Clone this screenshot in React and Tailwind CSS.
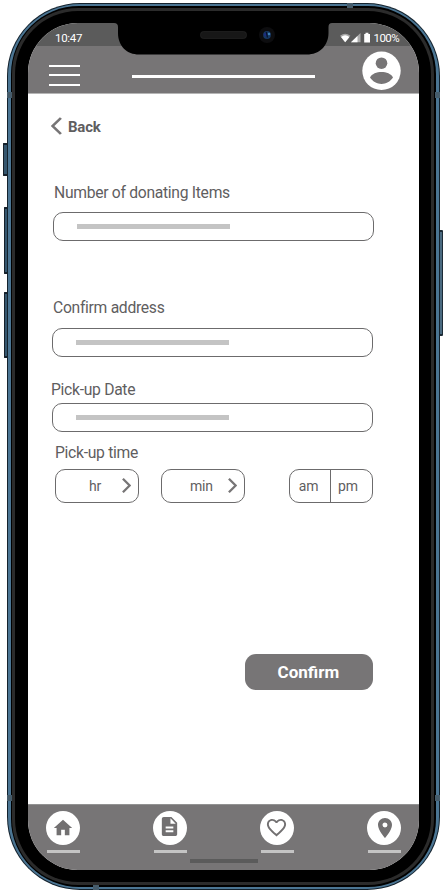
import React from "react";

function Field({ className = "" }) {
  return (
    <div className={`flex w-[321px] items-start rounded-[10px] border border-[#6c6b6c] pl-[22.6px] ${className}`}>
      <div className="h-[5px] w-[153.5px] bg-[#c4c4c4]" />
    </div>
  );
}

function Chevron({ left = false, className }) {
  return (
    <svg viewBox="0 0 10 18" className={className} fill="none" stroke="#777576" preserveAspectRatio="none">
      <path d={left ? "M9 1 L1.5 9 L9 17" : "M1 1 L8.5 9 L1 17"} strokeWidth="2.5" />
    </svg>
  );
}

function TimeSelect({ label, textClass, className = "" }) {
  return (
    <button className={`flex h-[34px] w-[84px] items-center rounded-[10px] border border-[#6c6b6c] ${className}`}>
      <span className={`leading-4 ${textClass}`}>{label}</span>
      <Chevron className="mr-[7px] ml-auto h-[15px] w-[9px]" />
    </button>
  );
}

function NavItem({ children }) {
  return (
    <div className="flex w-[34px] flex-col items-end">
      <div className="flex h-[34px] w-[34px] items-center justify-center rounded-full bg-white">{children}</div>
      <div className="mt-[5px] h-[3px] w-[33px] bg-[#c4c4c4]" />
    </div>
  );
}

function StatusBar() {
  return (
    <div className="flex h-[23px] items-center bg-[#5b5b5b] pt-[7px] text-white">
      <span className="ml-[27px] text-[11.500px] leading-3 tracking-[-0.3px]">10:47</span>
      <svg viewBox="0 0 32 12" className="ml-auto h-[12px] w-[32px]" fill="#fff">
        <path d="M1 3.8 Q6.2 -0.5 11.4 3.8 L6.2 10.2Z" opacity=".45" />
        <path d="M2 4.900 Q6.2 1.600 10.400 4.900 L6.2 10.2Z" />
        <path d="M12 10.3 L21.5 1 V10.3Z" opacity=".5" />
        <path d="M12 10.3 L18.5 4 V10.3Z" />
        <path d="M26.500 2 V0.800 H29.4 V2 H31 V10.5 H25.2 V2Z" />
      </svg>
      <span className="mr-[20px] ml-[3px] text-[11.500px] leading-3 tracking-[-0.600px]">100%</span>
    </div>
  );
}

function Header() {
  return (
    <header className="flex h-[48px] items-start border-b border-[#b5b5b5] bg-[#777576]">
      <div className="mt-[19px] ml-[21px] flex w-[31px] flex-col gap-[7.5px]">
        <div className="h-[2px] bg-white" />
        <div className="h-[2px] bg-white" />
        <div className="h-[2px] bg-white" />
      </div>
      <div className="mt-[29px] ml-[52.4px] h-[3px] w-[183px] bg-white" />
      <svg viewBox="0 0 39 39" className="mt-[5px] ml-[46.6px] h-[39px] w-[39px]">
        <circle cx="19.5" cy="19.8" r="19.2" fill="#fff" />
        <circle cx="19.5" cy="12.2" r="5.8" fill="#777576" />
        <path d="M8 26.6 C9.5 22.8 15 21 19.5 21 S29.5 22.8 31 26.6 C28 31 24 33 19.5 33 S11 31 8 26.6Z" fill="#777576" />
      </svg>
    </header>
  );
}

function Content() {
  return (
    <main className="flex h-[710px] flex-col items-start text-[15.700px] leading-[20px] tracking-[-0.300px] text-[#5f5e5f]">
      <button className="mt-[22px] ml-[23px] flex h-[20px] items-center">
        <Chevron left className="h-[18px] w-[11px]" />
        <span className="mt-[2px] ml-[6px] text-[15px] font-bold tracking-[-0.200px]">Back</span>
      </button>
      <label className="mt-[47px] ml-[26px]">Number of donating Items</label>
      <Field className="mt-[9px] ml-[25px] h-[29px] pt-[11px]" />
      <label className="mt-[57px] ml-[25px]">Confirm address</label>
      <Field className="mt-[10px] ml-[24px] h-[29px] pt-[11px]" />
      <label className="mt-[23px] ml-[23px]">Pick-up Date</label>
      <Field className="mt-[3px] ml-[24px] h-[29px] pt-[11px]" />
      <label className="mt-[11px] ml-[27px]">Pick-up time</label>
      <div className="mt-[6px] ml-[27px] flex text-[14px] tracking-[-0.200px]">
        <TimeSelect label="hr" textClass="ml-[33px]" />
        <TimeSelect label="min" textClass="ml-[28px]" className="ml-[22px]" />
        <div className="ml-[44px] flex h-[34px] w-[84px] rounded-[10px] border border-[#6c6b6c]">
          <button className="w-[41px] border-r border-[#6c6b6c] pr-[3px]">am</button>
          <button className="w-[41px] pr-[7px]">pm</button>
        </div>
      </div>
      <button className="mt-[151px] ml-[217.400px] h-[36px] w-[128px] rounded-[11px] bg-[#777576] pr-[2px] text-[17px] font-bold tracking-normal text-white">
        Confirm
      </button>
    </main>
  );
}

function BottomNav() {
  return (
    <nav className="flex flex-1 flex-col border-t border-[#929292] bg-[#777576]">
      <div className="mt-[6px] ml-[18px] flex gap-[73px]">
        <NavItem>
          <svg viewBox="0 0 24 24" className="h-[22px] w-[22px]" fill="#727071">
            <path d="M10 20v-6h4v6h5v-8h3L12 3 2 12h3v8z" />
          </svg>
        </NavItem>
        <NavItem>
          <svg viewBox="0 0 24 24" className="mb-[3px] h-[23px] w-[23px]" fill="#727071">
            <path d="M14 2H6c-1.1 0-2 .9-2 2v16c0 1.1.9 2 2 2h12c1.1 0 2-.9 2-2V8l-6-6zm2 16H8v-2h8v2zm0-4H8v-2h8v2zm-3-5V3.500L18.500 9H13z" />
          </svg>
        </NavItem>
        <NavItem>
          <svg viewBox="0 0 24 24" className="h-[23px] w-[23px]" fill="#727071">
            <path d="M16.500 3c-1.740 0-3.410.810-4.500 2.090C10.910 3.810 9.240 3 7.500 3 4.420 3 2 5.420 2 8.500c0 3.780 3.400 6.860 8.550 11.540L12 21.350l1.450-1.320C18.600 15.360 22 12.280 22 8.500 22 5.420 19.580 3 16.500 3zm-4.400 15.550l-.1.1-.1-.1C7.140 14.240 4 11.390 4 8.500 4 6.500 5.500 5 7.500 5c1.540 0 3.040.990 3.570 2.360h1.870C13.460 5.990 14.960 5 16.500 5c2 0 3.500 1.500 3.500 3.500 0 2.890-3.140 5.740-7.900 10.050z" />
          </svg>
        </NavItem>
        <NavItem>
          <svg viewBox="0 0 24 24" className="ml-[2px] h-[24px] w-[24px]" fill="#727071">
            <path d="M12 2C8.130 2 5 5.130 5 9c0 5.250 7 13 7 13s7-7.750 7-13c0-3.870-3.130-7-7-7zm0 9.500a2.500 2.500 0 0 1 0-5 2.500 2.500 0 0 1 0 5z" />
          </svg>
        </NavItem>
      </div>
      <div className="mt-[6px] ml-[162px] h-[4px] w-[68px] bg-[#5b5b5b]" />
    </nav>
  );
}

function Notch() {
  return (
    <svg viewBox="0 0 220 33" className="absolute top-[22px] left-[113px] h-[33px] w-[220px]">
      <path d="M0 0 H220 V1 H219 Q215.500 1 215.500 5 V11 C215.500 24 206 32.500 194 32.500 H26 C14 32.500 5 24 5 11 V5 Q5 1 1 1 H0Z" fill="#000" />
      <rect x="87.500" y="9.500" width="46" height="7" rx="3" fill="#171717" stroke="#292929" strokeWidth=".6" />
      <circle cx="154" cy="13" r="8" fill="#0d0d0f" />
      <circle cx="154" cy="13" r="3.900" fill="#163763" />
      <circle cx="152.500" cy="12.500" r="1.600" fill="#1d2c80" />
      <circle cx="156" cy="12" r="1.300" fill="#3d7fb3" />
      <path d="M153.300 10 L154.500 15.500" stroke="#07132b" strokeWidth="1.200" />
    </svg>
  );
}

export default function App() {
  return (
    <div
      className="relative h-[893px] w-[446px] overflow-hidden bg-white pt-[2.5px] pl-[6.5px]"
      style={{ fontFamily: 'Roboto, "Liberation Sans", sans-serif' }}
    >
      <div className="absolute top-[143px] left-[3px] h-[33px] w-[5px] rounded-l-[1px] border-y-2 border-l border-[#16212b] bg-[#35566e]" />
      <div className="absolute top-[207px] left-[4px] h-[67px] w-[4px] rounded-l-[1px] border-y-2 border-l border-[#16212b] bg-[#35566e]" />
      <div className="absolute top-[292px] left-[4px] h-[66px] w-[4px] rounded-l-[1px] border-y-2 border-l border-[#16212b] bg-[#35566e]" />
      <div className="absolute top-[230px] left-[439px] h-[106px] w-[4px] rounded-r-[1px] border-y-2 border-x border-[#1d2b36] bg-[#4a6a80]" />

      <div className="relative h-[887.5px] w-[433.5px] rounded-[73px] bg-[#14222d] p-[1px]">
        <div className="h-full w-full rounded-[72px] bg-[#4b7593] px-[3.500px] py-[2.5px]">
          <div className="h-full w-full rounded-[68px] bg-black px-[1.4px] py-[2px]">
            <div className="h-full w-full rounded-[66px] bg-[#2b2b2b] px-[2.800px] py-[2.800px]">
              <div className="h-full w-full rounded-[63px] bg-black pt-[12.2px] pl-[12.800px]">
                <div className="flex h-[847px] w-[391px] flex-col overflow-hidden rounded-[50px] bg-white">
                  <StatusBar />
                  <Header />
                  <Content />
                  <BottomNav />
                </div>
              </div>
            </div>
          </div>
        </div>
      </div>

      <div className="absolute top-[92px] left-[7px] h-[6px] w-[5px] bg-[#465c6b]" />
      <div className="absolute top-[92px] left-[435px] h-[6px] w-[5px] bg-[#465c6b]" />
      <div className="absolute top-[795px] left-[7px] h-[6px] w-[5px] bg-[#465c6b]" />
      <div className="absolute top-[795px] left-[435px] h-[6px] w-[5px] bg-[#465c6b]" />
      <div className="absolute top-[3px] left-[347px] h-[5px] w-[6px] bg-[#465c6b]" />
      <div className="absolute top-[885px] left-[93px] h-[5px] w-[6px] bg-[#465c6b]" />
      <Notch />
    </div>
  );
}
